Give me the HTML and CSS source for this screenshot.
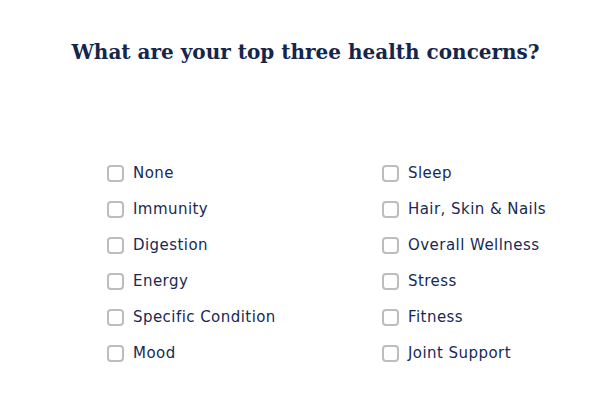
FILE: index.html
```html
<!DOCTYPE html>
<html lang="en">
<head>
    <meta charset="UTF-8">
    <title>Health concerns</title>
    <link rel="stylesheet" href="styles.css">
</head>
<body>

<div class="quiz">
    <h1>What are your top three health concerns?</h1>
    <div class="options">
        <label class="option"><input type="checkbox"><span class="box"></span>None</label>
        <label class="option"><input type="checkbox"><span class="box"></span>Sleep</label>
        <label class="option"><input type="checkbox"><span class="box"></span>Immunity</label>
        <label class="option"><input type="checkbox"><span class="box"></span>Hair, Skin &amp; Nails</label>
        <label class="option"><input type="checkbox"><span class="box"></span>Digestion</label>
        <label class="option"><input type="checkbox"><span class="box"></span>Overall Wellness</label>
        <label class="option"><input type="checkbox"><span class="box"></span>Energy</label>
        <label class="option"><input type="checkbox"><span class="box"></span>Stress</label>
        <label class="option"><input type="checkbox"><span class="box"></span>Specific Condition</label>
        <label class="option"><input type="checkbox"><span class="box"></span>Fitness</label>
        <label class="option"><input type="checkbox"><span class="box"></span>Mood</label>
        <label class="option"><input type="checkbox"><span class="box"></span>Joint Support</label>
    </div>
</div>

</body>
</html>
```

FILE: styles.css
```css
body {
    margin: 0;
    background-color: #FFFFFF;
    color: #172A55;
    font-family: "DejaVu Sans", sans-serif;
}

.quiz {
    padding-top: 40px;
}

.quiz h1 {
    margin: 0;
    text-align: center;
    font-family: "DejaVu Serif", serif;
    font-size: 20px;
    font-weight: bold;
    color: #14264A;
}

.options {
    display: grid;
    grid-template-columns: 275px 200px;
    row-gap: 16px;
    margin-top: 99px;
    padding-left: 107px;
}

.option {
    display: flex;
    align-items: center;
    height: 20px;
    font-size: 15px;
    letter-spacing: 0.45px;
    cursor: pointer;
}

.option input {
    display: none;
}

.box {
    width: 13px;
    height: 13px;
    border: 2px solid #BDBDBD;
    border-radius: 4px;
    margin-right: 9px;
}

.option input:checked + .box {
    background-color: #14264A;
    border-color: #14264A;
}
```
